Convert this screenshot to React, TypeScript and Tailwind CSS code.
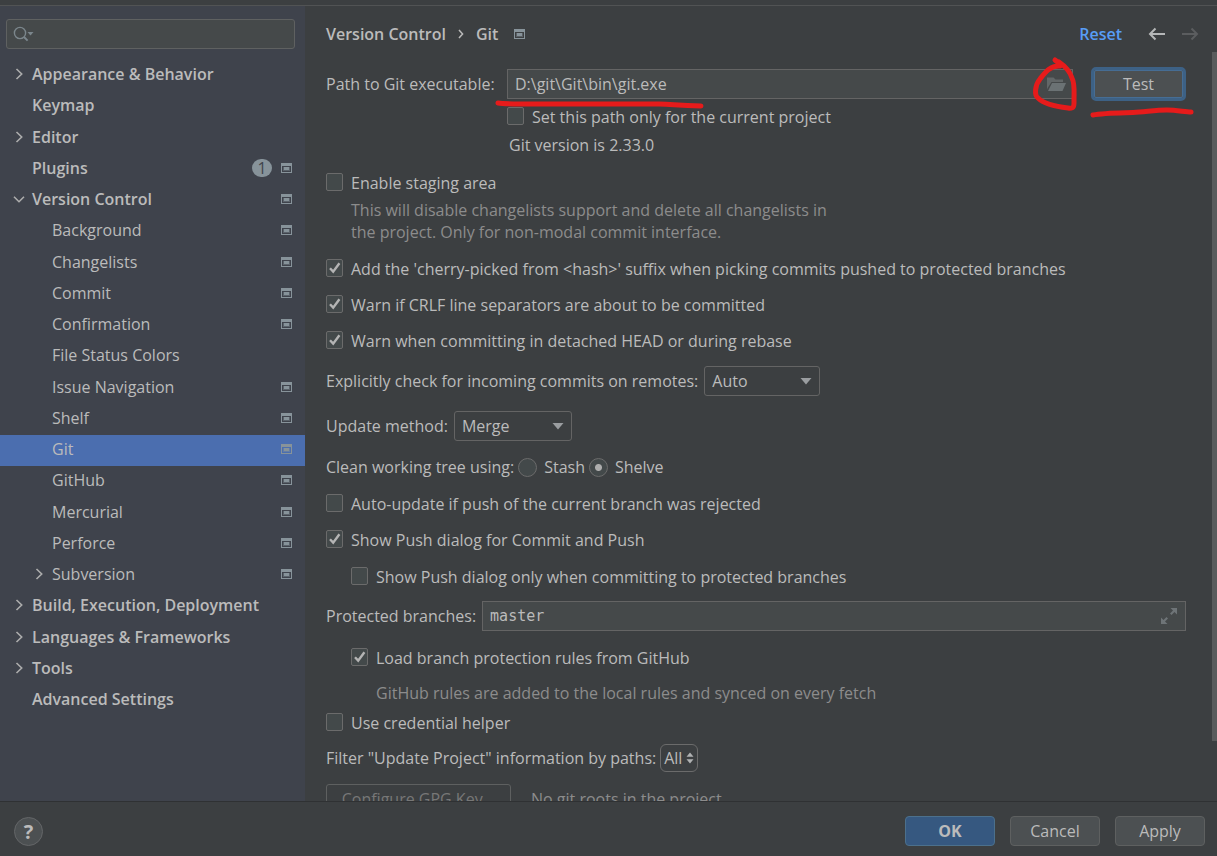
import React, { useId, useState } from "react";

type TreeItem = {
  label: string;
  level: 0 | 1;
  arrow?: "right" | "down";
  badge?: number;
  project?: boolean;
};

const TREE: TreeItem[] = [
  { label: "Appearance & Behavior", level: 0, arrow: "right" },
  { label: "Keymap", level: 0 },
  { label: "Editor", level: 0, arrow: "right" },
  { label: "Plugins", level: 0, badge: 1, project: true },
  { label: "Version Control", level: 0, arrow: "down", project: true },
  { label: "Background", level: 1, project: true },
  { label: "Changelists", level: 1, project: true },
  { label: "Commit", level: 1, project: true },
  { label: "Confirmation", level: 1, project: true },
  { label: "File Status Colors", level: 1 },
  { label: "Issue Navigation", level: 1, project: true },
  { label: "Shelf", level: 1, project: true },
  { label: "Git", level: 1, project: true },
  { label: "GitHub", level: 1, project: true },
  { label: "Mercurial", level: 1, project: true },
  { label: "Perforce", level: 1, project: true },
  { label: "Subversion", level: 1, arrow: "right", project: true },
  { label: "Build, Execution, Deployment", level: 0, arrow: "right" },
  { label: "Languages & Frameworks", level: 0, arrow: "right" },
  { label: "Tools", level: 0, arrow: "right" },
  { label: "Advanced Settings", level: 0 },
];

function ProjectIcon() {
  return (
    <svg width="11" height="10" viewBox="0 0 11 10" className="shrink-0" aria-hidden="true">
      <path fill="#87939a" fillRule="evenodd" d="M0 0H11V10H0ZM1 3V9H10V3Z" />
      <rect x="2" y="4" width="7" height="4" fill="#87939a" opacity="0.4" />
      <rect x="3" y="4" width="5" height="3" fill="#87939a" />
    </svg>
  );
}

function TreeArrow({ dir }: { dir: "right" | "down" }) {
  return (
    <svg width="12" height="12" viewBox="0 0 12 12" fill="none" stroke="#adadad" strokeWidth="1.6" aria-hidden="true">
      <path d={dir === "right" ? "M3.5 1L8.7 6L3.5 11" : "M1 3.7L6 8.7L11 3.7"} />
    </svg>
  );
}

function Sidebar() {
  const [selected, setSelected] = useState("Git");
  return (
    <aside className="flex w-[305px] shrink-0 flex-col bg-[#3f434c]">
      <label className="mx-1.5 mt-[13px] mr-2.5 flex h-[30px] shrink-0 items-center rounded-[3px] border border-[#5f6161] bg-[#45494a] pl-1.5">
        <svg width="21" height="16" viewBox="0 0 21 16" fill="none" aria-hidden="true">
          <circle cx="7" cy="7" r="5.6" stroke="#7b868c" strokeWidth="1.4" />
          <path d="M11 11L14.6 14.6" stroke="#7b868c" strokeWidth="2" />
          <path d="M14.5 6H20.5L17.5 9.5Z" fill="#7b868c" />
        </svg>
        <input type="text" aria-label="Search settings" className="min-w-0 flex-1 bg-transparent px-1 outline-none" />
      </label>
      <ul className="mt-[11px]">
        {TREE.map((item) => (
          <li key={item.label} className="h-[31px] nth-[4n+2]:h-8">
            <button
              type="button"
              onClick={() => setSelected(item.label)}
              className={
                "flex h-[31px] w-full items-center pr-[13px] pb-1 text-left " +
                (item.level === 0 ? "pl-[13px] font-semibold " : "pl-[33px] ") +
                (item.label === selected ? "bg-[#4b6eaf]" : "")
              }
            >
              <span className="flex w-[19px] shrink-0">{item.arrow && <TreeArrow dir={item.arrow} />}</span>
              <span className="flex-1 whitespace-nowrap">{item.label}</span>
              {item.badge && (
                <span className="mr-[9px] flex h-[18px] w-5 items-center justify-center rounded-full bg-[#87939a] text-base font-normal text-[#3f434c]">
                  {item.badge}
                </span>
              )}
              {item.project && <ProjectIcon />}
            </button>
          </li>
        ))}
      </ul>
    </aside>
  );
}

function Check({ label, on = false, className = "" }: { label: string; on?: boolean; className?: string }) {
  const id = useId();
  return (
    <div className={"flex h-[22px] shrink-0 items-center gap-2 " + className}>
      <span className="grid pb-0.5">
        <input
          id={id}
          type="checkbox"
          defaultChecked={on}
          className="peer h-[18px] w-[17px] appearance-none rounded-[2px] border border-[#6b6b6b] bg-[#43494a] [grid-area:1/1]"
        />
        <svg
          viewBox="0 0 17 18"
          className="pointer-events-none invisible h-[18px] w-[17px] [grid-area:1/1] peer-checked:visible"
          fill="none"
          aria-hidden="true"
        >
          <path d="M4 9.2L7.2 12.6L13.4 4.2" stroke="#b4b4b4" strokeWidth="2.4" />
        </svg>
      </span>
      <label htmlFor={id} className="whitespace-nowrap">{label}</label>
    </div>
  );
}

function Radio({ label, on = false }: { label: string; on?: boolean }) {
  const id = useId();
  return (
    <span className="flex items-center gap-[7px]">
      <input
        id={id}
        type="radio"
        name="clean"
        defaultChecked={on}
        className="size-[19px] appearance-none rounded-full border border-[#6b6b6b] bg-[#43494a] checked:bg-[radial-gradient(circle,#adadad_3px,#43494a_4px)]"
      />
      <label htmlFor={id}>{label}</label>
    </span>
  );
}

function Drop({ label, options, className }: { label: string; options: string[]; className: string }) {
  const id = useId();
  return (
    <div className="flex h-[30px] shrink-0 items-center gap-1.5">
      <label htmlFor={id} className="whitespace-nowrap">{label}</label>
      <span className={"grid items-center " + className}>
        <select
          id={id}
          className="h-[30px] w-full appearance-none rounded-[3px] border border-[#646464] bg-[#3c3f41] pl-[7px] outline-none [grid-area:1/1]"
        >
          {options.map((o) => (
            <option key={o}>{o}</option>
          ))}
        </select>
        <svg width="12" height="7" viewBox="0 0 12 7" className="pointer-events-none mr-2 justify-self-end [grid-area:1/1]" aria-hidden="true">
          <path d="M0.5 0H11.5L6 6.5Z" fill="#9a9da0" />
        </svg>
      </span>
    </div>
  );
}

function Marker({ d, className, box, width = 5 }: { d: string; className: string; box: string; width?: number }) {
  return (
    <svg
      viewBox={box}
      className={"pointer-events-none absolute z-10 " + className}
      fill="none"
      stroke="#e61b1b"
      strokeWidth={width}
      strokeLinecap="round"
      strokeLinejoin="round"
      aria-hidden="true"
    >
      <path d={d} />
    </svg>
  );
}

function Content() {
  return (
    <main className="flex min-w-0 flex-1 flex-col pl-[21px]">
      <header className="flex h-[46px] shrink-0 items-center pt-2.5 pr-[18px] font-semibold">
        <span>Version Control</span>
        <svg width="6" height="10" viewBox="0 0 6 10" className="mx-3" fill="none" stroke="#bbbbbb" strokeWidth="1.5" aria-hidden="true">
          <path d="M1 1L4.6 5L1 9" />
        </svg>
        <span className="mr-4">Git</span>
        <ProjectIcon />
        <a href="#reset" className="ml-auto text-[#589df6]">Reset</a>
        <button type="button" aria-label="Back" className="ml-[26px]">
          <svg width="17" height="14" viewBox="0 0 17 14" fill="none" stroke="#b5b7b8" strokeWidth="2" aria-hidden="true">
            <path d="M17 7H2M7.5 1.5L2 7L7.5 12.5" />
          </svg>
        </button>
        <button type="button" aria-label="Forward" className="ml-[17px]">
          <svg width="17" height="14" viewBox="0 0 17 14" fill="none" stroke="#5b5d5f" strokeWidth="2" aria-hidden="true">
            <path d="M0 7H15M9.5 1.5L15 7L9.5 12.5" />
          </svg>
        </button>
      </header>

      <div className="flex min-h-0 flex-1">
        <form className="flex min-w-0 flex-1 flex-col overflow-hidden pt-[15px] pr-[26px]" onSubmit={(e) => e.preventDefault()}>
          <div className="flex h-[34px] shrink-0 items-center">
            <label htmlFor="git-path" className="w-[181px] shrink-0">Path to Git executable:</label>
            <div className="relative flex h-[30px] min-w-0 flex-1 items-center border border-[#646464] bg-[#45494a] pr-1.5 pl-[7px]">
              <input id="git-path" type="text" defaultValue="D:\git\Git\bin\git.exe" className="min-w-0 flex-1 bg-transparent outline-none" />
              <button type="button" aria-label="Browse">
                <svg width="19" height="15" viewBox="0 0 19 15" aria-hidden="true">
                  <path fill="#626768" d="M0 0.500H6.500L8.500 2.500H16V5H4.500L1 10.500L0 12.500Z" />
                  <path fill="#6b7274" d="M5 6H19L15.500 14H1Z" />
                </svg>
              </button>
              <Marker
                className="top-7 -left-3.5 h-3 w-[212px]"
                box="0 0 212 12"
                d="M4 5C10 6 20 6 40 6H165C178 6 182 7.500 207 8"
              />
              <Marker
                className="-top-3.5 -right-1.5 h-14 w-[46px]"
                box="0 0 46 56"
                width={5}
                d="M23 4L29 9M28 10C18 9 12 18 8 23C3 29 2 39 6 42C12 48 27 51 36 52C43 53 42 49 42 43C42 37 43 28 40 22C38 16 33 10 27 6"
              />
            </div>
            <div className="relative ml-[18px] flex">
              <button type="button" className="h-[34px] w-[95px] rounded-[5px] border-[3px] border-[#3d6185] bg-[#4c5052] outline-1 -outline-offset-4 outline-[#466d94]">
                Test
              </button>
              <Marker
                className="top-10 -left-0.5 h-3 w-28"
                box="0 0 112 12"
                d="M4 8C14 6 25 6 44 5.500C56 5 66 3 78 3C88 3 96 5 102 5"
              />
            </div>
          </div>
          <Check label="Set this path only for the current project" className="mt-[5px] ml-[181px]" />
          <p className="mt-1.5 ml-[183px] shrink-0">Git version is 2.33.0</p>

          <Check label="Enable staging area" className="mt-4" />
          <p className="mt-[5px] ml-[25px] shrink-0 text-[#8c8c8c]">
            This will disable changelists support and delete all changelists in
            <br />
            the project. Only for non-modal commit interface.
          </p>
          <Check on label="Add the 'cherry-picked from <hash>' suffix when picking commits pushed to protected branches" className="mt-[15px]" />
          <Check on label="Warn if CRLF line separators are about to be committed" className="mt-3.5" />
          <Check on label="Warn when committing in detached HEAD or during rebase" className="mt-3.5" />

          <div className="mt-3.5 flex shrink-0 flex-col gap-[15px]">
            <Drop label="Explicitly check for incoming commits on remotes:" options={["Auto", "Always", "Never"]} className="w-[116px]" />
            <Drop label="Update method:" options={["Merge", "Rebase"]} className="w-[118px]" />
          </div>

          <fieldset className="mt-[15px] flex h-[22px] shrink-0 items-center gap-1">
            <span>Clean working tree using:</span>
            <Radio label="Stash" />
            <Radio label="Shelve" on />
          </fieldset>
          <Check label="Auto-update if push of the current branch was rejected" className="mt-[15px]" />
          <Check on label="Show Push dialog for Commit and Push" className="mt-3.5" />
          <Check label="Show Push dialog only when committing to protected branches" className="mt-[15px] ml-[25px]" />

          <div className="mt-[13px] flex h-[30px] shrink-0 items-center gap-1.5">
            <label htmlFor="protected">Protected branches:</label>
            <div className="flex h-[30px] min-w-0 flex-1 items-center border border-[#646464] bg-[#45494a] pr-2 pl-[7px]">
              <input
                id="protected"
                type="text"
                defaultValue="master"
                className="min-w-0 flex-1 bg-transparent font-['DejaVu_Sans_Mono',monospace] text-[15px] outline-none"
              />
              <button type="button" aria-label="Expand">
                <svg width="16" height="16" viewBox="0 0 16 16" fill="#6e7477" aria-hidden="true">
                  <path d="M9.500 0H16V6.500L13.500 4L10.500 7L9 5.500L12 2.500Z" />
                  <path d="M0 9.500L2.500 12L5.500 9L7 10.500L4 13.500L6.500 16H0Z" />
                </svg>
              </button>
            </div>
          </div>
          <Check on label="Load branch protection rules from GitHub" className="mt-4 ml-[25px]" />
          <p className="mt-[13px] ml-[50px] shrink-0 text-[#8c8c8c]">GitHub rules are added to the local rules and synced on every fetch</p>
          <Check label="Use credential helper" className="mt-2" />

          <div className="mt-2.5 flex h-7 shrink-0 items-center gap-1">
            <span id="filter-label">Filter "Update Project" information by paths:</span>
            <button type="button" className="flex h-7 items-center gap-1 rounded-md border border-[#6b6b6b] px-[3px]">
              All
              <svg width="8" height="12" viewBox="0 0 8 12" fill="#b0b2b3" aria-hidden="true">
                <path d="M0.500 4.700L4 0.500L7.500 4.700ZM0.500 7.300H7.500L4 11.500Z" />
              </svg>
            </button>
          </div>
          <div className="mt-3 flex h-[30px] shrink-0 items-center gap-5 text-[#8c8c8c]">
            <button type="button" disabled className="h-[30px] w-[185px] rounded-[3px] border border-[#5e6060] text-[#777777]">
              Configure GPG Key...
            </button>
            <span>No git roots in the project</span>
          </div>
        </form>
        <div className="flex w-[5px] shrink-0 flex-col">
          <div className="h-[92%] bg-[#595b5c]" />
        </div>
      </div>
    </main>
  );
}

export default function App() {
  return (
    <div className="flex h-screen flex-col overflow-hidden bg-[#3c3f41] font-['Open_Sans','Noto_Sans',sans-serif] text-base leading-[22px] text-[#bbbbbb]">
      <div className="h-1.5 shrink-0 border-b border-[#515354]" />
      <div className="flex min-h-0 flex-1">
        <Sidebar />
        <Content />
      </div>
      <footer className="flex h-[55px] shrink-0 items-center gap-[15px] border-t border-[#2f3133] pt-1 pr-3 pl-3.5">
        <button type="button" aria-label="Help" className="mr-auto size-[29px] rounded-full border border-[#646668] bg-[#4c5052] text-xl font-bold">
          ?
        </button>
        <button type="button" className="h-[30px] w-[90px] rounded-[4px] border border-[#4c708c] bg-[#365880] font-bold">OK</button>
        <button type="button" className="h-[30px] w-[90px] rounded-[4px] border border-[#5e6060] bg-[#4c5052]">Cancel</button>
        <button type="button" className="h-[30px] w-[90px] rounded-[4px] border border-[#5e6060] bg-[#4c5052]">Apply</button>
      </footer>
    </div>
  );
}
